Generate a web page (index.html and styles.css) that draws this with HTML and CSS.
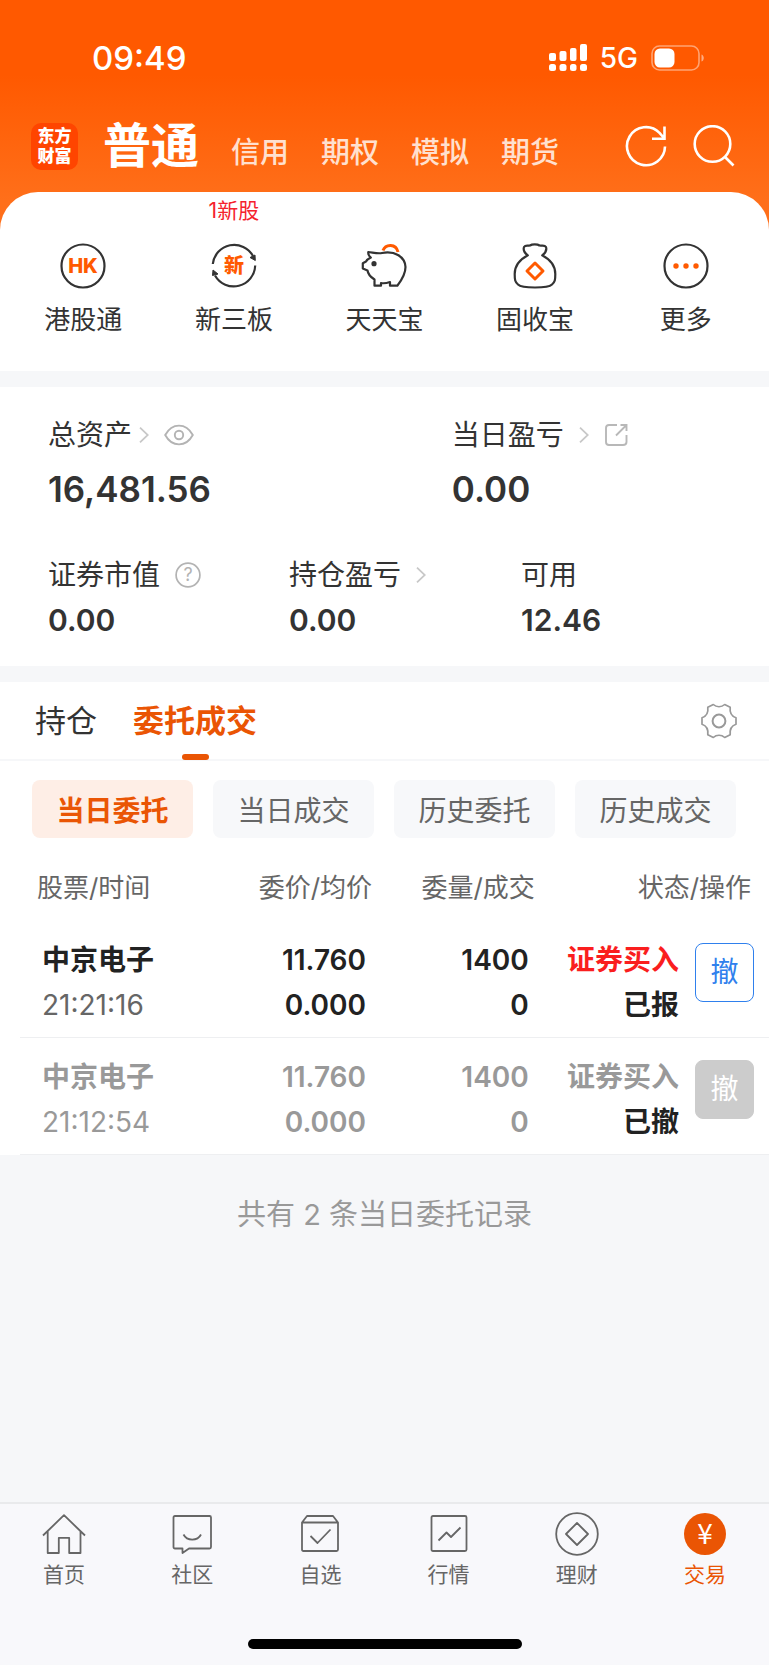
FILE: index.html
```html
<!DOCTYPE html>
<html lang="zh-CN">
<head>
<meta charset="utf-8">
<meta name="viewport" content="width=device-width, initial-scale=1">
<title>交易</title>
<link rel="stylesheet" href="styles.css">
</head>
<body>
<div class="app">
  <div class="top">
    <div class="status">
      <span class="status-time">09:49</span>
      <span class="status-right">
        <svg class="signal" width="38" height="28" viewBox="0 0 38 28" fill="#fff" aria-hidden="true">
          <rect x="0" y="9" width="7" height="8" rx="2"/><rect x="10.500" y="7" width="7" height="10" rx="2"/><rect x="21" y="4" width="6.500" height="13" rx="2"/><rect x="31" y="0" width="7" height="17" rx="2"/>
          <rect x="0" y="20" width="7" height="7" rx="2.500"/><rect x="10.500" y="20" width="7" height="7" rx="2.500"/><rect x="21" y="20" width="6.500" height="7" rx="2.500"/><rect x="31" y="20" width="7" height="7" rx="2.500"/>
        </svg>
        <span class="network">5G</span>
        <svg width="54" height="26" viewBox="0 0 54 26" aria-hidden="true">
          <rect x="1" y="1" width="47" height="24" rx="7.500" fill="none" stroke="#fff" stroke-opacity=".45" stroke-width="1.600"/>
          <rect x="3.500" y="3.500" width="20" height="19" rx="5.500" fill="#fff"/>
          <path d="M50.500 9.500c3 1 3 6 0 7z" fill="#fff" fill-opacity=".5"/>
        </svg>
      </span>
    </div>
    <header class="header">
      <div class="logo"><span>东方</span><span>财富</span></div>
      <nav class="accounts">
        <a class="account current" href="#">普通</a>
        <a class="account" href="#">信用</a>
        <a class="account" href="#">期权</a>
        <a class="account" href="#">模拟</a>
        <a class="account" href="#">期货</a>
      </nav>
      <div class="tools">
        <button class="icon-btn" type="button" aria-label="刷新">
          <svg width="42" height="42" viewBox="0 0 42 42" fill="none" stroke="#fff" stroke-width="2.600"><path d="M40 21.500A19 19 0 1 1 34.500 7.800L39 13M39.500 1.500V13.700H27"/></svg>
        </button>
        <button class="icon-btn" type="button" aria-label="搜索">
          <svg width="42" height="42" viewBox="0 0 42 42" fill="none" stroke="#fff" stroke-width="2.600"><circle cx="19.500" cy="19" r="17.800"/><path d="M31.500 31.500 40.500 40.500"/></svg>
        </button>
      </div>
    </header>
    <nav class="shortcuts">
      <a class="shortcut" href="#">
        <svg width="46" height="46" viewBox="0 0 46 46"><circle cx="23" cy="23" r="21.500" fill="none" stroke="#333" stroke-width="2.200"/><text class="hk" x="23" y="30" text-anchor="middle">HK</text></svg>
        <span>港股通</span>
      </a>
      <a class="shortcut" href="#">
        <em class="badge">1新股</em>
        <svg width="46" height="46" viewBox="0 0 46 46"><path d="M1.800 21A21.500 21.500 0 0 1 42 13M44.200 22.500A21.500 21.500 0 0 1 4 32.500" fill="none" stroke="#333" stroke-width="2.200"/><path d="m39 14.500 5-2.500.3 5.500zM7 31l-5.500 1.500.5-5.500z" fill="#333" stroke="#333"/><text class="xin" x="23" y="30" text-anchor="middle">新</text></svg>
        <span>新三板</span>
      </a>
      <a class="shortcut" href="#">
        <svg width="46" height="46" viewBox="0 0 46 46" fill="none" stroke-linejoin="round"><path d="M22 7.500C24.500.800 35 .200 37 9" stroke="#ff5a00" stroke-width="3"/><path d="M7.300 9C12 9.500 17 11 21 10C34 7.500 44 14 44.500 24C44.500 31 40 38 36.300 42.700H29V39C26 40 22.500 40.500 20 40V42.700H13.500V36.500C9.500 34 7 31 6.500 27.500L1.800 25.500V20.200L5 18.500C6 16.500 8 15.500 9.800 14.600C8 13 7 11 7.300 9z" stroke="#333" stroke-width="2.200"/><circle cx="13" cy="20.700" r="2.600" fill="#333"/></svg>
        <span>天天宝</span>
      </a>
      <a class="shortcut" href="#">
        <svg width="46" height="46" viewBox="0 0 46 46" fill="none" stroke-linejoin="round"><path d="M15.800 12.300C12 9.500 11 7 12 4C13.500 1.500 16 3 18 2.500C20 1 25.500 1 27.500 2.500C30 3 32.500 1.500 34 4C35 7 34 9.500 30.200 12.300C39 17 43.300 24 43.300 31C43.300 37 43 39 40 41.500C36 45.500 10 45.500 6 41.500C3 39 2.700 37 2.700 31C2.700 24 7 17 15.800 12.300z" stroke="#333" stroke-width="2.200"/><path d="m23 20 8 8-8 8-8-8z" stroke="#ff5a00" stroke-width="3"/></svg>
        <span>固收宝</span>
      </a>
      <a class="shortcut" href="#">
        <svg width="46" height="46" viewBox="0 0 46 46"><circle cx="23" cy="23" r="21.500" fill="none" stroke="#333" stroke-width="2.200"/><g fill="#ff5a00"><circle cx="13" cy="23" r="2.700"/><circle cx="23" cy="23" r="2.700"/><circle cx="33" cy="23" r="2.700"/></g></svg>
        <span>更多</span>
      </a>
    </nav>
  </div>

  <section class="assets">
    <div class="asset-row main">
      <div class="asset">
        <div class="asset-label">总资产
          <svg class="near" width="10" height="16" viewBox="0 0 10 16" fill="none" stroke="#c8c8c8" stroke-width="1.800"><path d="m1 .700 7.800 7.300L1 15.300"/></svg>
          <svg width="30" height="22" viewBox="0 0 30 22" fill="none" stroke="#b3b3b3" stroke-width="1.900"><path d="M1.200 11C8-1.500 22-1.500 28.800 11C22 23.500 8 23.500 1.200 11z"/><circle cx="15" cy="11" r="4.200"/></svg>
        </div>
        <div class="asset-value">16,481.56</div>
      </div>
      <div class="asset">
        <div class="asset-label">当日盈亏
          <svg width="10" height="16" viewBox="0 0 10 16" fill="none" stroke="#c8c8c8" stroke-width="1.800"><path d="m1 .700 7.800 7.300L1 15.300"/></svg>
          <svg width="24" height="24" viewBox="0 0 24 24" fill="none" stroke="#b8b8b8" stroke-width="1.900"><path d="M13 2H5Q2 2 2 5V19Q2 22 5 22H19Q22.500 22 22.500 19V12M16.500 2H22.500V8M22 2.500 12 12.500"/></svg>
        </div>
        <div class="asset-value">0.00</div>
      </div>
    </div>
    <div class="asset-row sub">
      <div class="asset">
        <div class="asset-label">证券市值
          <svg width="26" height="26" viewBox="0 0 26 26"><circle cx="13" cy="13" r="11.900" fill="none" stroke="#b3b3b3" stroke-width="1.700"/><text class="help" x="13" y="19" text-anchor="middle">?</text></svg>
        </div>
        <div class="asset-value">0.00</div>
      </div>
      <div class="asset">
        <div class="asset-label">持仓盈亏
          <svg width="10" height="16" viewBox="0 0 10 16" fill="none" stroke="#c8c8c8" stroke-width="1.800"><path d="m1 .700 7.800 7.300L1 15.300"/></svg>
        </div>
        <div class="asset-value">0.00</div>
      </div>
      <div class="asset">
        <div class="asset-label">可用</div>
        <div class="asset-value">12.46</div>
      </div>
    </div>
  </section>

  <section class="orders">
    <div class="tabs">
      <a class="tab" href="#">持仓</a>
      <a class="tab current" href="#">委托成交</a>
      <button class="icon-btn gear" type="button" aria-label="设置">
        <svg width="36" height="36" viewBox="0 0 36 36" fill="none" stroke="#999" stroke-width="1.700" stroke-linejoin="round"><path d="M1 14.800V21.200C5 22.500 7.500 26 6.800 31.800L12.300 34.500C15.500 31.500 20.500 31.500 23.700 34.500L29.200 31.800C28.500 26 31 22.500 35 21.200V14.800C31 13.500 28.500 10 29.200 4.200L23.700 1.500C20.500 4.500 15.500 4.500 12.300 1.500L6.800 4.200C7.500 10 5 13.500 1 14.800z"/><circle cx="18" cy="18" r="6.400" stroke-width="2"/></svg>
      </button>
    </div>
    <div class="pills">
      <button class="pill current" type="button">当日委托</button>
      <button class="pill" type="button">当日成交</button>
      <button class="pill" type="button">历史委托</button>
      <button class="pill" type="button">历史成交</button>
    </div>
    <table class="list">
      <thead>
        <tr><th class="c-name">股票/时间</th><th class="c-price">委价/均价</th><th class="c-qty">委量/成交</th><th class="c-state">状态/操作</th></tr>
      </thead>
      <tbody>
        <tr>
          <td class="c-name"><b>中京电子</b><span>21:21:16</span></td>
          <td class="c-price"><b>11.760</b><b>0.000</b></td>
          <td class="c-qty"><b>1400</b><b>0</b></td>
          <td class="c-state"><div class="state"><div><b class="buy">证券买入</b><b>已报</b></div><button class="cancel" type="button">撤</button></div></td>
        </tr>
        <tr class="done">
          <td class="c-name"><b>中京电子</b><span>21:12:54</span></td>
          <td class="c-price"><b>11.760</b><b>0.000</b></td>
          <td class="c-qty"><b>1400</b><b>0</b></td>
          <td class="c-state"><div class="state"><div><b>证券买入</b><b class="result">已撤</b></div><button class="cancel" type="button" disabled>撤</button></div></td>
        </tr>
      </tbody>
    </table>
  </section>
  <p class="summary">共有 2 条当日委托记录</p>

  <footer class="bottom">
    <nav class="tabbar">
      <a href="#"><svg width="44" height="44" viewBox="0 0 44 44"><path d="M1 23.500 22 3.200 43 23.500M5.700 19.500V41H16.800V25.800H27.200V41H38.500V19.500"/></svg>首页</a>
      <a href="#"><svg width="44" height="44" viewBox="0 0 44 44"><path d="M5 4H39.500Q41 4 41 5.500V35Q41 36.500 39.500 36.500H19L12.500 41V36.500H5Q3.500 36.500 3.500 35V5.500Q3.500 4 5 4zM13.500 22.500C17 29.300 27.500 29.300 31 22.500"/></svg>社区</a>
      <a href="#"><svg width="44" height="44" viewBox="0 0 44 44"><path d="M4 10.500 9 4H35L40 10.500V37.500Q40 39 38.500 39H5.500Q4 39 4 37.500zM4 10.500H40M12.500 24 19.500 31 32.500 17.500"/></svg>自选</a>
      <a href="#"><svg width="44" height="44" viewBox="0 0 44 44"><path d="M6 4H38Q39.500 4 39.500 5.500V37.500Q39.500 39 38 39H6Q4.500 39 4.500 37.500V5.500Q4.500 4 6 4zM11.500 28.500 19.500 20.500 24 25 33.500 15.500"/></svg>行情</a>
      <a href="#"><svg width="44" height="44" viewBox="0 0 44 44"><circle cx="22" cy="22" r="20.800"/><path d="M22 11 33 22 22 33 11 22z"/></svg>理财</a>
      <a class="current" href="#"><svg width="44" height="44" viewBox="0 0 44 44"><circle class="disc" cx="22" cy="22" r="21"/><text class="yuan" x="22" y="32" text-anchor="middle">¥</text></svg>交易</a>
    </nav>
    <div class="home-indicator"></div>
  </footer>
</div>
</body>
</html>
```

FILE: styles.css
```css
* { box-sizing: border-box; }

body {
  margin: 0;
  background: #f6f7f9;
  color: #333;
  font-family: Inter, "Noto Sans CJK SC", sans-serif;
  font-size: 28px;
}

a { color: inherit; text-decoration: none; }
b { font-weight: 600; }
svg { display: block; flex: none; }
button { font: inherit; color: inherit; cursor: pointer; }

.app {
  display: flex;
  flex-direction: column;
  min-height: 100vh;
}

/* Orange header */
.top { background: linear-gradient(#ff5900 75px, #ff6f1a 200px); }

.status {
  display: flex;
  justify-content: space-between;
  align-items: center;
  height: 115px;
  padding: 0 64px 0 92px;
  color: #fff;
}
.status-time { font-size: 33px; font-weight: 500; }
.status-right { display: flex; align-items: center; gap: 13px; }
.network { font-size: 28px; font-weight: 500; }

.header {
  display: flex;
  align-items: center;
  height: 77px;
  padding: 0 34px 15px 31px;
  color: #fff;
}
.logo {
  display: flex;
  flex-direction: column;
  align-items: center;
  justify-content: center;
  width: 47px;
  height: 47px;
  border-radius: 10px;
  background: #ff4500;
  font-size: 17px;
  line-height: 20px;
  font-weight: 900;
}
.accounts {
  display: flex;
  align-items: baseline;
  gap: 32px;
  margin: 7px 0 0 25px;
}
.account { font-size: 29px; line-height: 60px; font-weight: 500; color: #ffe0cf; }
.account.current { font-size: 48px; font-weight: 700; color: #fff; }
.tools { display: flex; gap: 26px; margin-left: auto; }
.icon-btn { padding: 0; border: 0; background: none; }

.shortcuts {
  display: grid;
  grid-template-columns: repeat(5, 1fr);
  padding: 51px 8px 33px;
  border-radius: 38px 38px 0 0;
  background: #fff;
}
.shortcut {
  position: relative;
  display: flex;
  flex-direction: column;
  align-items: center;
  gap: 13px;
  font-size: 26px;
  line-height: 36px;
}
.badge {
  position: absolute;
  top: -46px;
  font-size: 21px;
  line-height: 28px;
  font-style: normal;
  color: #f5222d;
}
.hk { font-size: 20px; font-weight: 800; fill: #ff5a00; }
.xin { font-size: 20px; font-weight: 900; fill: #ff5a00; }

/* Assets */
.assets {
  margin: 16px 0;
  padding: 28px 48px 26px;
  background: #fff;
}
.asset-row { display: grid; }
.asset-row.main { grid-template-columns: 3fr 2fr; }
.asset-row.sub { grid-template-columns: 241fr 232fr 200fr; margin-top: 42px; }
.asset-label {
  display: flex;
  align-items: center;
  gap: 15px;
  line-height: 40px;
}
.asset-label .near { margin-left: -8px; }
.asset-value { font-weight: 600; }
.main .asset-value { font-size: 35px; line-height: 48px; padding-top: 10px; }
.sub .asset-value { font-size: 30px; line-height: 40px; padding-top: 5px; }
.help { font-size: 18px; fill: #b3b3b3; }

/* Orders */
.orders { background: #fff; }
.tabs {
  display: flex;
  align-items: center;
  gap: 36px;
  height: 79px;
  padding: 0 32px 0 35px;
  border-bottom: 2px solid #f6f7f9;
  font-size: 31px;
}
.tab { position: relative; line-height: 77px; }
.tab.current { color: #ea5504; font-weight: 600; }
.tab.current::after {
  content: "";
  position: absolute;
  left: 50%;
  bottom: -1px;
  width: 27px;
  height: 6px;
  margin-left: -13px;
  border-radius: 3px;
  background: #ea5504;
}
.gear { margin-left: auto; }

.pills {
  display: grid;
  grid-template-columns: repeat(4, 1fr);
  gap: 20px;
  padding: 19px 33px 0 32px;
}
.pill {
  height: 58px;
  padding: 0;
  border: 0;
  border-radius: 8px;
  background: #f7f8fa;
  color: #666;
}
.pill.current { background: #feeee6; color: #ea5504; font-weight: 600; }

.list {
  width: calc(100% - 20px);
  margin-left: 20px;
  border-collapse: collapse;
  table-layout: fixed;
}
.list th {
  height: 83px;
  padding: 12px 0 0;
  font-size: 26px;
  font-weight: 400;
  color: #666;
  text-align: right;
}
.list th.c-name { width: 25%; padding-left: 17px; text-align: left; }
.list th.c-price { width: 22%; }
.list th.c-qty { width: 22%; padding-right: 2px; }
.list th.c-state { width: 31%; padding-right: 18px; }
.list td {
  padding: 17px 0 9px;
  border-bottom: 1px solid #eeeff1;
  line-height: 45px;
  text-align: right;
  vertical-align: top;
  color: #222;
}
.list td b, .list td span { display: block; }
.list td.c-name { padding-left: 22px; text-align: left; }
.list td.c-name span { color: #666; }
.list td.c-price { padding-right: 6px; }
.list td.c-qty { padding-right: 8px; }
.list td.c-state { padding-right: 15px; }
.state { display: flex; justify-content: flex-end; gap: 16px; }
.list .buy { color: #fa1e1e; }
.list .done td, .list .done td.c-name span { color: #999; }
.list .done .result { color: #222; }
.cancel {
  width: 59px;
  height: 59px;
  margin-top: 5px;
  padding: 0;
  border: 1px solid #2f80ed;
  border-radius: 8px;
  background: #fff;
  color: #2f80ed;
}
.cancel:disabled { border-color: #ccc; background: #ccc; color: #fff; }

.summary {
  margin: 0;
  padding: 38px 0;
  font-size: 29px;
  line-height: 44px;
  text-align: center;
  color: #999;
}

/* Bottom bar */
.bottom {
  margin-top: auto;
  padding: 8px 0 16px;
  border-top: 2px solid #e9eaec;
  background: #f8f8fb;
}
.tabbar { display: grid; grid-template-columns: repeat(6, 1fr); }
.tabbar a {
  display: flex;
  flex-direction: column;
  align-items: center;
  gap: 4px;
  font-size: 21px;
  line-height: 30px;
  color: #666;
}
.tabbar svg { fill: none; stroke: #666; stroke-width: 1.8; stroke-linejoin: round; }
.tabbar .current { color: #ea5504; }
.tabbar .disc { fill: #ea5504; stroke: none; }
.yuan { font-family: "Noto Sans CJK SC", sans-serif; font-size: 28px; fill: #fff; stroke: none; }
.home-indicator {
  width: 274px;
  height: 10px;
  margin: 49px auto 0;
  border-radius: 5px;
  background: #000;
}
```
